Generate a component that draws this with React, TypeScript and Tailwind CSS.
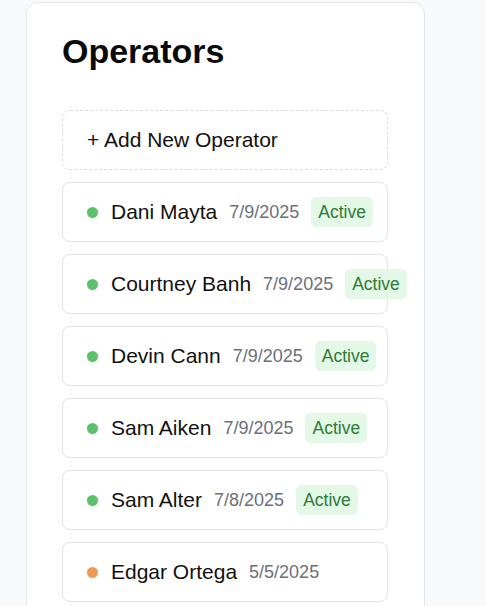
const operators = [
  { name: "Dani Mayta", date: "7/9/2025", active: true },
  { name: "Courtney Banh", date: "7/9/2025", active: true },
  { name: "Devin Cann", date: "7/9/2025", active: true },
  { name: "Sam Aiken", date: "7/9/2025", active: true },
  { name: "Sam Alter", date: "7/8/2025", active: true },
  { name: "Edgar Ortega", date: "5/5/2025", active: false },
];

export default function App() {
  return (
    <div className="min-h-screen bg-[#f8f9fb] pl-[26px] pt-[2px] font-['Liberation_Sans',Arial,sans-serif]">
      <div className="w-[399px] min-h-[700px] rounded-xl border border-[#e6e7ea] bg-white pl-[35px] pr-[36px] pt-[31px] pb-9">
        <h1 className="text-[34px] font-bold leading-none text-[#0a0a0a]">Operators</h1>

        {/* Add button */}
        <button className="mt-[42px] flex h-[60px] w-full items-center rounded-lg border border-dashed border-[#dcdcdc] px-6 text-left text-[21px] text-[#111]">
          + Add New Operator
        </button>

        {/* Operator list */}
        <ul className="mt-3 space-y-3">
          {operators.map((op) => (
            <li
              key={op.name}
              className="flex h-[60px] items-center gap-3 whitespace-nowrap rounded-lg border border-[#e3e3e3] px-6"
            >
              <span
                className={
                  op.active
                    ? "mr-[1px] h-[11px] w-[11px] shrink-0 rounded-full bg-[#5dc26b]"
                    : "mr-[1px] h-[11px] w-[11px] shrink-0 rounded-full bg-[#ef9a4f]"
                }
              />
              <span className="text-[21px] text-[#111]">{op.name}</span>
              <span className="text-[18px] text-[#6b6f7b]">{op.date}</span>
              {op.active && (
                <span className="shrink-0 rounded-md bg-[#e3f8e6] px-[7px] py-[5px] text-[17.5px] leading-5 text-[#2f7a38]">
                  Active
                </span>
              )}
            </li>
          ))}
        </ul>
      </div>
    </div>
  );
}
